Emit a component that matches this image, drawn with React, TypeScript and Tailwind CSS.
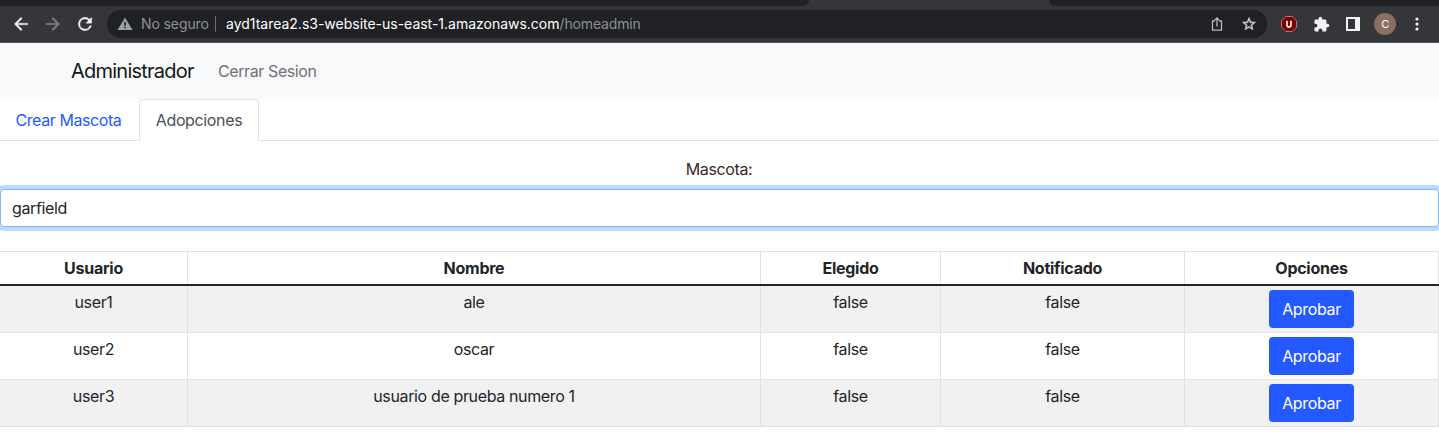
import React from "react";

const rows = [
  { user: "user1", name: "ale" },
  { user: "user2", name: "oscar" },
  { user: "user3", name: "usuario de prueba numero 1" },
];

function BrowserBar() {
  return (
    <header className="flex h-[43px] flex-col border-b border-[#5b5c60] bg-[#35363a]">
      <div className="flex h-[6px] shrink-0 justify-between">
        <div className="w-[809px] rounded-br-[7px] bg-[#202124]" />
        <div className="w-[390px] rounded-bl-[7px] bg-[#202124]" />
      </div>
      <div className="flex h-9 items-center">
        <div className="flex w-[107px] items-center gap-3 pl-[11px]">
          <svg width="20" height="20" viewBox="0 0 24 24" fill="#f1f3f4" stroke="#f1f3f4" strokeWidth=".4"><path d="M20 11H7.83l5.59-5.59L12 4l-8 8 8 8 1.41-1.41L7.83 13H20z" /></svg>
          <svg width="20" height="20" viewBox="0 0 24 24" fill="#7f8184" stroke="#7f8184" strokeWidth=".4"><path d="M12 4l-1.41 1.41L16.17 11H4v2h12.17l-5.58 5.59L12 20l8-8z" /></svg>
          <svg width="20" height="20" viewBox="0 0 24 24" fill="#f1f3f4" stroke="#f1f3f4" strokeWidth=".4"><path d="M17.65 6.35C16.2 4.9 14.21 4 12 4a8 8 0 1 0 7.73 10h-2.08A6 6 0 1 1 12 6c1.66 0 3.14.69 4.22 1.78L13 11h7V4z" /></svg>
        </div>
        <div className="flex h-7 w-[1160px] items-center rounded-full bg-[#202124] text-[14px] leading-7">
          <svg className="ml-[10px] shrink-0" width="16" height="16" viewBox="0 0 16 16"><path d="M8 1.5 15.5 14H.5z" fill="#9aa0a6" /><path d="M7.2 6h1.6v3.7H7.2zM7.2 10.8h1.6v1.5H7.2z" fill="#202124" /></svg>
          <span className="ml-2 w-[67px] shrink-0 whitespace-nowrap tracking-[-0.1px] text-[#8e9297]">No seguro</span>
          <span className="ml-[7px] h-4 w-px bg-[#6b6e72]" />
          <span className="ml-[10px] whitespace-nowrap tracking-[-0.15px] text-[#8e9297]"><span className="tracking-[-0.01px] text-white">ayd1tarea2.s3-website-us-east-1.amazonaws.com</span>/homeadmin</span>
          <div className="ml-auto mr-2.5 flex items-center gap-4">
            <svg width="16" height="16" viewBox="0 0 16 16" fill="none" stroke="#b4b7bb" strokeWidth="1.3"><path d="M5.8 5H3.5v9.2h9V5h-2.3M8 10.5V2M5.3 4.6 8 1.9l2.7 2.7" /></svg>
            <svg width="16" height="16" viewBox="0 0 24 24" fill="#c7c9cc"><path d="m22 9.24-7.19-.62L12 2 9.19 8.63 2 9.24l5.46 4.73L5.82 21 12 17.27 18.18 21l-1.63-7.03zM12 15.4l-3.76 2.27 1-4.28-3.32-2.88 4.38-.38L12 6.1l1.71 4.04 4.38.38-3.32 2.88 1 4.28z" stroke="#c7c9cc" strokeWidth=".8" /></svg>
          </div>
        </div>
        <div className="flex items-center pl-3.5">
          <svg width="16" height="16" viewBox="0 0 16 16"><path d="M4.8.5h6.4l4.3 4.3v6.4l-4.3 4.3H4.8L.5 11.2V4.8z" fill="#800000" stroke="#c58f8f" strokeWidth=".8" /><path d="M6 4.8v4.1a2 2 0 0 0 4 0V4.8" fill="none" stroke="#fff" strokeWidth="1.6" /></svg>
          <svg className="ml-4" width="17" height="17" viewBox="0 0 24 24" fill="#f1f3f4"><path d="M20.5 11H19V7c0-1.1-.9-2-2-2h-4V3.5a2.5 2.5 0 0 0-5 0V5H4c-1.1 0-2 .9-2 2v3.8h1.5a2.7 2.7 0 0 1 0 5.4H2V20c0 1.1.9 2 2 2h3.8v-1.5a2.7 2.7 0 0 1 5.4 0V22H17c1.1 0 2-.9 2-2v-4h1.5a2.5 2.5 0 0 0 0-5z" /></svg>
          <svg className="ml-4" width="14" height="14" viewBox="0 0 14 14"><path d="M0 0h14v14H0z" fill="#f1f3f4" /><path d="M2 2h7v10H2z" fill="#35363a" /></svg>
          <span className="ml-3.5 flex size-[22px] items-center justify-center rounded-full bg-[#8d6e63] text-[11px] text-white">C</span>
          <svg className="ml-[19px]" width="4" height="14" viewBox="0 0 4 14" fill="#f1f3f4"><circle cx="2" cy="2" r="1.6" /><circle cx="2" cy="7" r="1.6" /><circle cx="2" cy="12" r="1.6" /></svg>
        </div>
      </div>
    </header>
  );
}

export default function App() {
  return (
    <div className="h-[447px] w-[1439px] overflow-hidden bg-white font-['Inter','Liberation_Sans',sans-serif] text-base tracking-[-0.36px] text-[#212529]">
      <BrowserBar />
      <nav className="flex h-14 items-center bg-[#f8f9fb] pl-[71px]">
        <span className="w-[147px] text-xl tracking-[-0.76px] text-[#151617]">Administrador</span>
        <span className="tracking-[-0.4px] text-[#717274]">Cerrar Sesion</span>
      </nav>
      <div className="flex h-[42px] border-b border-[#dee2e6]">
        <a className="w-[139px] py-[9px] pl-[15.5px] leading-6 tracking-[-0.42px] text-[#2459ff]">Crear Mascota</a>
        <a className="-mb-px h-[42px] w-[120px] rounded-t border border-b-white border-[#dee2e6] bg-white pt-2 text-center leading-6 text-[#495057]">Adopciones</a>
      </div>
      <main className="pt-4 text-center">
        <label htmlFor="pet" className="mb-2 block pr-px leading-6 text-[#412525]">Mascota:</label>
        <input id="pet" readOnly value="garfield" className="block h-[38px] w-full rounded border border-[#86b3fe] bg-white px-[11px] tracking-[-0.36px] outline-none ring-4 ring-[#bdd9ff]" />
        <table className="mt-6 w-full table-fixed border-separate border-spacing-0 border-t border-[#dee2e6] leading-6">
          <colgroup>
            <col className="w-[188px]" />
            <col className="w-[573px]" />
            <col className="w-[180px]" />
            <col className="w-[244px]" />
            <col className="w-[254px]" />
          </colgroup>
          <thead>
            <tr>
              {["Usuario", "Nombre", "Elegido", "Notificado", "Opciones"].map((h) => (
                <th key={h} className="h-8 border-r border-[#dee2e6] p-0 font-bold tracking-[-0.26px]">{h}</th>
              ))}
            </tr>
            <tr>
              <td colSpan={5} className="h-[2px] bg-[#212529] p-0" />
            </tr>
          </thead>
          <tbody>
            {rows.map((r) => (
              <tr key={r.user} className="odd:bg-[#f1f1f1]">
                {[r.user, r.name, "false", "false"].map((v, i) => (
                  <td key={i} className="h-[47px] border-r border-b border-[#dee2e6] px-0 py-1 align-top">{v}</td>
                ))}
                <td className="h-[47px] border-r border-b border-[#dee2e6] px-0 py-1 align-top">
                  <button className="mx-auto block h-[38px] w-[85px] rounded bg-[#2459ff] text-white">Aprobar</button>
                </td>
              </tr>
            ))}
          </tbody>
        </table>
      </main>
    </div>
  );
}
